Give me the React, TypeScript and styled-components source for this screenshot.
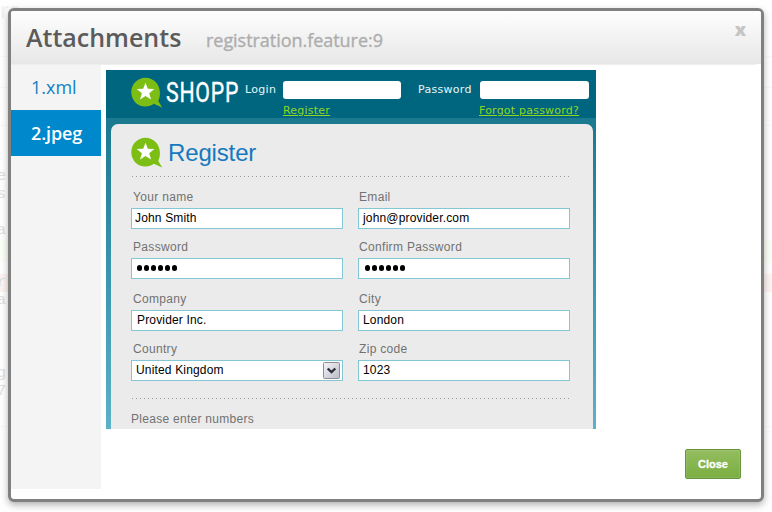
import React from "react";
import styled, { createGlobalStyle } from "styled-components";

const GlobalStyle = createGlobalStyle`
  * { box-sizing: border-box; }
  html, body { margin: 0; padding: 0; background: #fefefe; overflow: hidden; }
  body { font-family: "Liberation Sans", Arial, sans-serif; }
`;

const Page = styled.div`
  position: relative;
  width: 772px;
  height: 512px;
  overflow: hidden;
  background: #fefefe;
`;

const Backdrop = styled.div`
  display: flex;
  flex-direction: column;
  height: 512px;
`;

const BackTitle = styled.div`
  height: 57px;
  border-bottom: 1px solid #f9f9f9;
  font: 600 21px/20px "Open Sans", sans-serif;
  letter-spacing: -0.5px;
  color: #f1f1f1;
`;

const BackRow = styled.div<{ $h: number; $tint?: string; $rule?: boolean }>`
  flex: none;
  height: ${(p) => p.$h}px;
  background: ${(p) => p.$tint ?? "transparent"};
  border-bottom: ${(p) => (p.$rule ? "1px solid #f8f8f8" : "none")};
  font: 15px/18px "Liberation Mono", monospace;
  color: #dedede;
  text-indent: -3px;
`;

const Modal = styled.div`
  position: absolute;
  left: 8px;
  top: 8px;
  width: 756px;
  height: 494px;
  display: flex;
  flex-direction: column;
  border: 3px solid #808080;
  border-radius: 6px;
  background: #fff;
  box-shadow: 0 3px 7px rgba(0, 0, 0, 0.3);
`;

const Header = styled.header`
  flex: none;
  display: flex;
  align-items: flex-start;
  height: 53px;
  padding: 9px 15px 0 15px;
  background: linear-gradient(#fefefe, #e7e7e7);
  border-radius: 2px 2px 0 0;
`;

const HeaderRule = styled.div`
  flex: none;
  width: 745px;
  height: 1px;
  background: #eeeeee;
`;

const Title = styled.h3`
  margin: 0;
  width: 180px;
  font: 600 25px/34px "Open Sans", sans-serif;
  letter-spacing: 0px;
  color: #5b5b5b;
`;

const Subtitle = styled.span`
  flex: 1;
  padding-top: 4px;
  font: 400 18px/32px "Open Sans", sans-serif;
  letter-spacing: -0.04px;
  -webkit-text-stroke: 0.35px #adadad;
  color: #adadad;
`;

const Dismiss = styled.button`
  margin: -1px 0 0 0;
  padding: 0;
  border: 0;
  background: none;
  font: 800 18px/20px "Open Sans", sans-serif;
  color: #c5c5c5;
`;

const Body = styled.div`
  display: flex;
  height: 424px;
`;

const Tabs = styled.nav`
  width: 90px;
  background: #f4f4f4;
`;

const Tab = styled.a<{ $active?: boolean }>`
  display: block;
  height: ${(p) => (p.$active ? 46 : 45)}px;
  padding-left: 20px;
  background: ${(p) => (p.$active ? "#0088cc" : "transparent")};
  color: ${(p) => (p.$active ? "#fff" : "#1580c4")};
  font: ${(p) => (p.$active ? "600 18px/46px" : "400 18px/44px")} "Open Sans", sans-serif;
  letter-spacing: ${(p) => (p.$active ? -0.1 : 0)}px;
`;

const Pane = styled.section`
  flex: 1;
  padding: 5px;
`;

const Shot = styled.div`
  width: 490px;
  height: 359px;
  overflow: hidden;
  background: linear-gradient(#00667f 48px, #1b7a90 48px, #1b7a90 56px, #3794ab 190px, #5cb1c7);
`;

const TopBar = styled.div`
  display: grid;
  grid-template-columns: 25px 35px 79px 38px 118px 17px 62px 109px;
  height: 48px;
  padding-top: 6px;
`;

const BrandName = styled.div`
  width: 79px;
  padding-top: 1px;
  font: 400 28px/32px Roboto, sans-serif;
  letter-spacing: 1px;
  -webkit-text-stroke: 0.4px #fff;
  transform: scaleX(0.76);
  transform-origin: 0 0;
  color: #fff;
`;

const BarLabel = styled.label`
  padding-top: 6px;
  font: 11px/16px "DejaVu Sans", Verdana, sans-serif;
  letter-spacing: 0.3px;
  white-space: nowrap;
  color: #e8f6f8;
`;

const BarField = styled.div`
  padding-top: 5px;
`;

const BarInput = styled.div`
  height: 18px;
  border-radius: 3px;
  background: #fff;
`;

const BarLink = styled.a<{ $shift?: number }>`
  display: block;
  width: max-content;
  margin: 5px 0 0 ${(p) => p.$shift ?? 0}px;
  font: 11px/14px "DejaVu Sans", Verdana, sans-serif;
  letter-spacing: 0.22px;
  text-decoration: underline;
  color: #8fd61f;
`;

const Card = styled.div`
  width: 482px;
  height: 320px;
  margin: 6px 0 0 5px;
  padding: 12px 22px 0 20px;
  border-radius: 7px 7px 0 0;
  background: #ebebeb;
`;

const CardHead = styled.div`
  display: flex;
  height: 40px;
  align-items: flex-start;
`;

const CardTitle = styled.h1`
  margin: 2px 0 0 5px;
  font: 400 24px/30px "Liberation Sans", Arial, sans-serif;
  letter-spacing: -0.15px;
  color: #1679bf;
`;

const Dots = styled.div`
  height: 1px;
  margin-left: 1px;
  background: repeating-linear-gradient(90deg, #999 0 1px, transparent 1px 4px);
`;

const Form = styled.div`
  display: grid;
  grid-template-columns: 212px 212px;
  column-gap: 15px;
  grid-template-rows: 50px 52px 50px 57px;
  padding-top: 12px;
`;

const Label = styled.label<{ $inset: number }>`
  display: block;
  height: 19px;
  padding-left: ${(p) => p.$inset}px;
  font: 12px/17px "Liberation Sans", Arial, sans-serif;
  letter-spacing: 0.32px;
  white-space: nowrap;
  color: #727272;
`;

const Note = styled.p`
  margin: 12px 0 0;
  font: 12px/17px "Liberation Sans", Arial, sans-serif;
  letter-spacing: 0.28px;
  color: #727272;
`;

const Input = styled.div<{ $indent: number }>`
  display: flex;
  align-items: center;
  justify-content: space-between;
  height: 21px;
  padding: 0 2px 1px ${(p) => p.$indent}px;
  border: 1px solid #83c7d6;
  background: #fff;
  font: 12px/18px "Liberation Sans", Arial, sans-serif;
  letter-spacing: 0.16px;
  color: #000;
`;

const Secret = styled.span`
  display: flex;
  gap: 1.6px;
  padding-left: 2px;
`;

const Dot = styled.i`
  width: 5.4px;
  height: 5.4px;
  border-radius: 50%;
  background: #000;
`;

const Footer = styled.footer`
  position: absolute;
  right: 20px;
  bottom: 20px;
`;

const CloseButton = styled.button`
  display: block;
  width: 56px;
  height: 30px;
  padding: 0;
  border: 1px solid #66943a;
  border-radius: 2px;
  background: linear-gradient(#94bd5f, #7aae42);
  box-shadow: inset 0 0 0 1px rgba(255, 255, 255, 0.1);
  font: bold 11px/28px "Liberation Sans", Arial, sans-serif;
  -webkit-text-stroke: 0.3px #fff;
  color: #fff;
`;

const BubbleSvg = styled.svg`
  flex: none;
  display: block;
  overflow: visible;
`;

const Bubble = () => (
  <BubbleSvg width="32" height="33" viewBox="0 0 32 33">
    <path
      d="M14.5 1.800C6.500 1.800.3 8.200.3 16.200S6.500 30.500 14.500 30.500c3.200 0 6-1 8.300-2.700l8.400 3.800-3.900-6.700c1.100-2.100 1.800-5.800 1.600-8.700C28.600 8.200 22.500 1.800 14.500 1.800Z"
      fill="#7dbe15"
    />
    <path
      d="m14.500 6.700 2.300 6.100 6.600.2-5.200 4.200 1.900 6.400-5.600-3.700-5.500 3.700 1.900-6.400-5.200-4.200 6.500-.2Z"
      fill="#fff"
    />
  </BubbleSvg>
);

const SelectArrow = () => (
  <svg width="17" height="17" viewBox="0 0 17 17">
    <defs>
      <linearGradient id="arrowFill" x2="1" y2="1">
        <stop stopColor="#f6f6fa" />
        <stop offset="1" stopColor="#babac8" />
      </linearGradient>
    </defs>
    <rect x=".5" y=".5" width="16" height="16" rx="1" fill="url(#arrowFill)" stroke="#8c8d99" />
    <path d="m4.700 6.500 3.800 3.700 3.800-3.700" fill="none" stroke="#30303a" strokeWidth="2.400" />
  </svg>
);

type Field = {
  label: string;
  inset: number;
  value?: string;
  indent: number;
  secret?: boolean;
  select?: boolean;
};

const fields: Field[] = [
  { label: "Your name", inset: 2, value: "John Smith", indent: 3 },
  { label: "Email", inset: 1, value: "john@provider.com", indent: 4 },
  { label: "Password", inset: 2, secret: true, indent: 3 },
  { label: "Confirm Password", inset: 1, secret: true, indent: 4 },
  { label: "Company", inset: 2, value: "Provider Inc.", indent: 5 },
  { label: "City", inset: 1, value: "London", indent: 4 },
  { label: "Country", inset: 2, value: "United Kingdom", indent: 4, select: true },
  { label: "Zip code", inset: 1, value: "1023", indent: 4 },
];

const RegistrationPreview = () => (
  <Shot>
    <TopBar>
      <span />
      <Bubble />
      <BrandName>SHOPP</BrandName>
      <BarLabel>Login</BarLabel>
      <BarField>
        <BarInput />
        <BarLink>Register</BarLink>
      </BarField>
      <span />
      <BarLabel>Password</BarLabel>
      <BarField>
        <BarInput />
        <BarLink $shift={-1}>Forgot password?</BarLink>
      </BarField>
    </TopBar>
    <Card>
      <CardHead>
        <Bubble />
        <CardTitle>Register</CardTitle>
      </CardHead>
      <Dots />
      <Form>
        {fields.map((f) => (
          <div key={f.label}>
            <Label $inset={f.inset}>{f.label}</Label>
            <Input $indent={f.indent}>
              {f.secret ? (
                <Secret>
                  {Array.from({ length: 6 }, (_, i) => (
                    <Dot key={i} />
                  ))}
                </Secret>
              ) : (
                f.value
              )}
              {f.select && <SelectArrow />}
            </Input>
          </div>
        ))}
      </Form>
      <Dots />
      <Note>Please enter numbers</Note>
    </Card>
  </Shot>
);

const App = () => (
  <>
    <GlobalStyle />
    <Page>
      <Backdrop aria-hidden="true">
        <BackTitle>re</BackTitle>
        <BackRow $h={31} $rule />
        <BackRow $h={38} $rule />
        <BackRow $h={42} />
        <BackRow $h={18}>e</BackRow>
        <BackRow $h={36}>s</BackRow>
        <BackRow $h={18}>a</BackRow>
        <BackRow $h={22} $tint="#fbfef7" />
        <BackRow $h={12} />
        <BackRow $h={18} $tint="#fdf3f3">r</BackRow>
        <BackRow $h={73}>a</BackRow>
        <BackRow $h={18}>g</BackRow>
        <BackRow $h={44} $rule>7</BackRow>
      </Backdrop>
      <Modal>
        <Header>
          <Title>Attachments</Title>
          <Subtitle>registration.feature:9</Subtitle>
          <Dismiss>x</Dismiss>
        </Header>
        <HeaderRule />
        <Body>
          <Tabs>
            <Tab>1.xml</Tab>
            <Tab $active>2.jpeg</Tab>
          </Tabs>
          <Pane>
            <RegistrationPreview />
          </Pane>
        </Body>
        <Footer>
          <CloseButton>Close</CloseButton>
        </Footer>
      </Modal>
    </Page>
  </>
);

export default App;
